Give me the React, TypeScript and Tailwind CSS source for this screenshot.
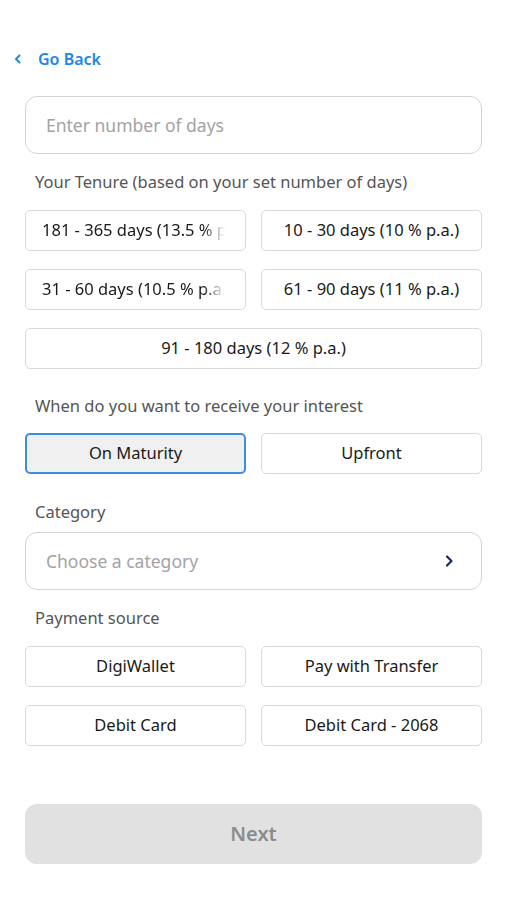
import { useState } from 'react';

const tenures = [
  '181 - 365 days (13.5 % p.a.)',
  '10 - 30 days (10 % p.a.)',
  '31 - 60 days (10.5 % p.a.)',
  '61 - 90 days (11 % p.a.)',
];

function Chip({ label, active, fade, onClick, className = '' }: { label: string; active?: boolean; fade?: boolean; onClick?: () => void; className?: string }) {
  return (
    <button
      type="button"
      onClick={onClick}
      className={`flex h-[41px] items-center rounded-[5px] border px-4 text-[16.5px] text-[#1a1a1a] ${
        active ? 'border-2 border-[#3d8de0] bg-[#f0f0f0]' : 'border-[#d9d9d9] bg-white'
      } ${className}`}
    >
      <span
        className={`block w-full overflow-hidden text-center whitespace-nowrap ${
          fade ? 'mr-1 [mask-image:linear-gradient(to_right,black_88%,transparent)]' : ''
        }`}
      >
        {label}
      </span>
    </button>
  );
}

export default function App() {
  const [interest, setInterest] = useState('On Maturity');

  return (
    <div className="min-h-[900px] bg-white px-[25px] pt-[47px] font-['Noto_Sans',sans-serif]">
      <button type="button" className="-ml-[13px] flex items-center gap-[14px] text-[16px] font-semibold text-[#1b87e6]">
        <svg width="12" height="12" viewBox="0 0 12 12" fill="none" stroke="currentColor" strokeWidth="2" strokeLinecap="round" strokeLinejoin="round">
          <path d="M7.5 2.5 4 6l3.5 3.5" />
        </svg>
        Go Back
      </button>

      <div className="mt-[25px] flex h-[58px] items-center rounded-[12px] border border-[#d4d4d4] px-5">
        <input
          className="w-full text-[17.5px] text-[#222] placeholder:text-[#a3a3a3] focus:outline-none"
          placeholder="Enter number of days"
        />
      </div>

      <p className="mt-[16px] px-[10px] text-[16.5px] leading-6 text-[#555]">Your Tenure (based on your set number of days)</p>
      <div className="mt-[16px] grid grid-cols-2 gap-x-[15px] gap-y-[18px]">
        {tenures.map((t, i) => (
          <Chip key={t} label={t} fade={i % 2 === 0} />
        ))}
        <Chip label="91 - 180 days (12 % p.a.)" className="col-span-2" />
      </div>

      <p className="mt-[25px] px-[10px] text-[16.5px] leading-6 text-[#555]">When do you want to receive your interest</p>
      <div className="mt-[15px] grid grid-cols-2 gap-x-[15px]">
        {['On Maturity', 'Upfront'].map((o) => (
          <Chip key={o} label={o} active={interest === o} onClick={() => setInterest(o)} />
        ))}
      </div>

      <p className="mt-[26px] px-[10px] text-[16.5px] leading-6 text-[#555]">Category</p>
      <div className="mt-[8px] flex h-[58px] items-center justify-between rounded-[12px] border border-[#d4d4d4] pr-[27px] pl-5">
        <span className="text-[17.5px] text-[#a3a3a3]">Choose a category</span>
        <svg width="10" height="14" viewBox="0 0 10 14" fill="none" stroke="#1b2b5e" strokeWidth="2.2" strokeLinecap="round" strokeLinejoin="round">
          <path d="M3 2.5 7.5 7 3 11.5" />
        </svg>
      </div>

      <p className="mt-[16px] px-[10px] text-[16.5px] leading-6 text-[#555]">Payment source</p>
      <div className="mt-[16px] grid grid-cols-2 gap-x-[15px] gap-y-[18px]">
        {['DigiWallet', 'Pay with Transfer', 'Debit Card', 'Debit Card - 2068'].map((p) => (
          <Chip key={p} label={p} />
        ))}
      </div>

      <button
        type="button"
        disabled
        className="mt-[58px] flex h-[60px] w-full items-center justify-center rounded-[12px] bg-[#e1e1e1] text-[20px] font-semibold text-[#8c8c8c]"
      >
        Next
      </button>
    </div>
  );
}
